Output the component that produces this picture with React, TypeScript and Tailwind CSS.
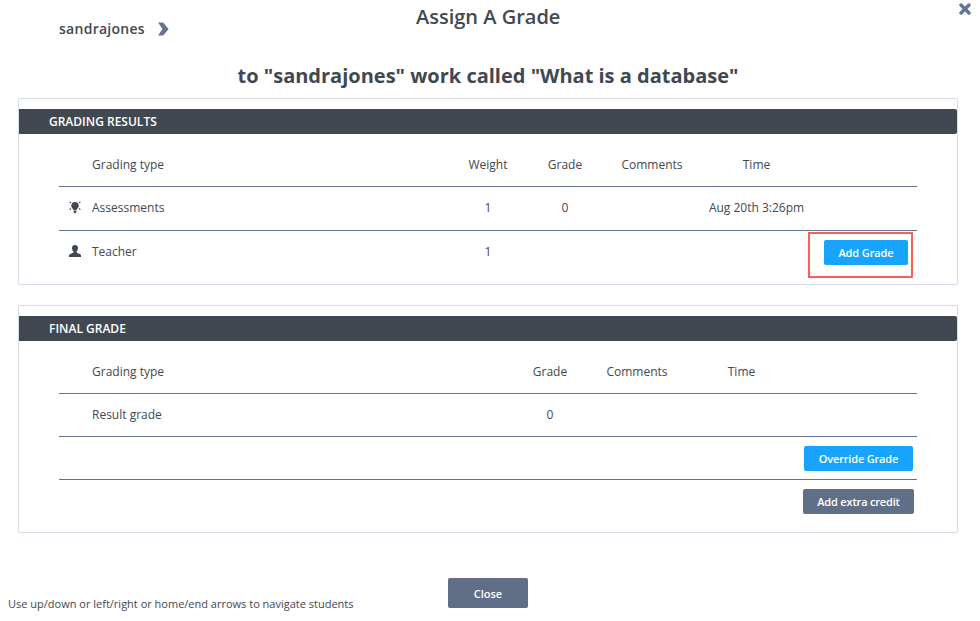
import type { ReactNode } from "react";

function Header({ cols, titles }: { cols: string; titles: string[] }) {
  return (
    <div className={`grid ${cols} h-[43px] items-center text-center`}>
      <span className="pl-[33px] text-left">{titles[0]}</span>
      {titles.slice(1).map((t) => (
        <span key={t}>{t}</span>
      ))}
    </div>
  );
}

function Panel({ title, height, children }: { title: string; height: string; children: ReactNode }) {
  return (
    <section className={`mx-[18px] w-[940px] rounded-[2px] border border-[#d6d9e7] pt-[10px] ${height}`}>
      <h3 className="h-[25px] rounded-r-[2px] bg-[#424851] pl-[30px] text-[12px] leading-[25px] font-semibold text-white">
        {title}
      </h3>
      <div className="mx-[40px] pt-[9px]">{children}</div>
    </section>
  );
}

function Bulb() {
  return (
    <svg width="12" height="13" viewBox="0 0 12 13" fill="#414852">
      <path d="M6 1a3.700 3.700 0 0 0-3.700 3.700c0 1.500.8 2.300 1.500 3.100L4.500 9h3l.7-1.200c.7-.8 1.500-1.600 1.500-3.100A3.700 3.700 0 0 0 6 1zM4.600 9.400h2.800v1.300L6.700 12.300H5.300l-.7-1.600z" />
      <path d="M.6.8l1.300 1.200M11.400.8l-1.300 1.200M.6 8.700l1.300-1.200M11.400 8.700l-1.300-1.200" stroke="#414852" strokeWidth="1.100" />
    </svg>
  );
}

function Person() {
  return (
    <svg width="12" height="12" viewBox="0 0 12 12" fill="#414852" className="-mt-[1px]">
      <path d="M6 0C4.200 0 3 1.200 3 3c0 1.500.6 2.900 1.500 3.600v1L1.300 8.900C.4 9.300 0 9.800 0 11v1h12v-1c0-1.200-.4-1.700-1.300-2.100L7.500 7.600v-1C8.400 5.900 9 4.500 9 3c0-1.800-1.200-3-3-3z" />
    </svg>
  );
}

export default function App() {
  return (
    <main className="relative h-[621px] w-[980px] overflow-hidden bg-white font-['Open_Sans',sans-serif] text-[12px] text-[#414852]">
      <button className="absolute top-[3px] left-[959px]" aria-label="Close dialog">
        <svg width="12" height="12" viewBox="0 0 12 12" stroke="#66748f" strokeWidth="3.400" strokeLinecap="round">
          <path d="M2 2l8 8M10 2L2 10" />
        </svg>
      </button>
      <header className="grid h-[98px] grid-cols-[416px_1fr] grid-rows-[58px_40px]">
        <div className="flex h-[57px] items-center gap-[12px] pl-[59px] text-[14px] font-semibold">
          <span className="w-[86px] tracking-[0.27px]">sandrajones</span>
          <svg width="12" height="14" viewBox="0 0 12 14" fill="#66748f">
            <path d="M1 .5h4.500q.7 0 1.100.6L11.600 7l-5 5.900q-.4.6-1.100.6H1L5.500 7z" />
          </svg>
        </div>
        <h1 className="pt-[3px] text-[20px] leading-[28px] font-semibold">Assign A Grade</h1>
        <h2 className="col-span-2 pl-[237.500px] pt-[4px] text-[20px] leading-[28px] font-bold whitespace-nowrap">
          to "sandrajones" work called "What is a database"
        </h2>
      </header>

      <Panel title="GRADING RESULTS" height="h-[187px]">
        <Header cols="grid-cols-[390px_78px_76px_98px_111px_105px]" titles={["Grading type", "Weight", "Grade", "Comments", "Time"]} />
        <div className="grid h-[44px] grid-cols-[390px_78px_76px_98px_111px_105px] items-center border-t border-[#66738f] pb-[2px] text-center">
          <span className="flex items-center gap-[11px] pl-[10px]"><Bulb />Assessments</span>
          <span>1</span><span>0</span><span /><span className="whitespace-nowrap">Aug 20th 3:26pm</span>
        </div>
        <div className="grid h-[54px] grid-cols-[390px_78px_281px_109px] items-start border-t border-[#66738f] text-center">
          <span className="flex h-[41px] items-center gap-[11px] pl-[10px]"><Person />Teacher</span>
          <span className="leading-[41px]">1</span><span />
          <div className="mt-[1px] h-[46px] w-[105px] border-2 border-[#ff5d5d] pt-[6px] pl-[14px]">
            <button className="block h-[25px] w-[84px] rounded-[2px] bg-[#18a4fc] pt-[1px] text-[11px] font-semibold tracking-[-0.120px] text-white">Add Grade</button>
          </div>
        </div>
      </Panel>

      <div className="h-[20px]" />

      <Panel title="FINAL GRADE" height="h-[228px]">
        <Header cols="grid-cols-[452px_78px_96px_113px_119px]" titles={["Grading type", "Grade", "Comments", "Time"]} />
        <div className="grid h-[43px] grid-cols-[452px_78px_328px] items-center border-t border-[#66738f] text-center">
          <span className="pl-[33px] text-left">Result grade</span><span>0</span>
        </div>
        <div className="flex h-[43px] justify-end border-t border-[#66738f] pt-[9px] pr-[4px]">
          <button className="h-[25px] w-[109px] rounded-[2px] bg-[#18a4fc] pt-[1px] text-[11px] font-semibold tracking-[-0.180px] text-white">Override Grade</button>
        </div>
        <div className="flex h-[43px] justify-end border-t border-[#66738f] pt-[9px] pr-[3px]">
          <button className="h-[25px] w-[111px] rounded-[2px] bg-[#606f87] pt-[1px] text-[11px] font-semibold tracking-[-0.180px] text-white">Add extra credit</button>
        </div>
      </Panel>

      <footer className="flex h-[88px] pt-[45px]">
        <p className="w-[448px] pt-[17px] pl-[8px] text-[11px] leading-[18px]">Use up/down or left/right or home/end arrows to navigate students</p>
        <button className="h-[30px] w-[80px] rounded-[2px] bg-[#606f87] pt-[2px] text-[11px] font-semibold text-white">Close</button>
      </footer>
    </main>
  );
}
